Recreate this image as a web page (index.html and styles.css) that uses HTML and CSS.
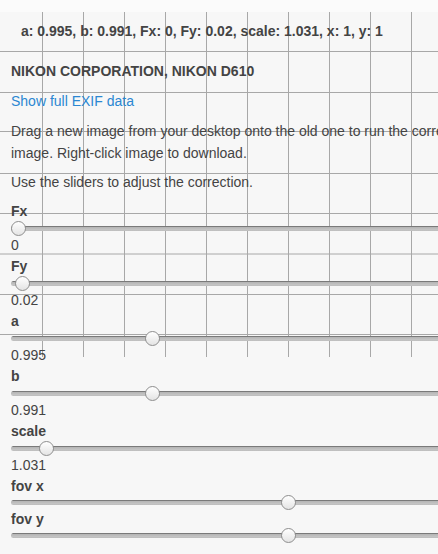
FILE: index.html
```html
<!DOCTYPE html>
<html lang="en">
<head>
<meta charset="utf-8">
<title>Lens correction</title>
<link rel="stylesheet" href="styles.css">
</head>
<body>
<div class="page">
  <div class="topstrip"></div>
  <svg class="grid" width="600" height="345" viewBox="0 0 600 345" aria-hidden="true">
    <g stroke="#a8a8a8" stroke-width="1" fill="none">
      <path d="M42.5 0V345M83.5 0V345M124.5 0V345M165.5 0V345M206.5 0V345M247.5 0V345M288.5 0V345M329.5 0V345M370.5 0V345M411.5 0V345M452.5 0V345"/>
      <path d="M0 39.5H600M0 80.5H600M0 119.5H600M0 161.5H600M0 201.5H600M0 242H600M0 282.5H600M0 322.5H600"/>
    </g>
  </svg>
  <main class="content">
    <div class="params">a: 0.995, b: 0.991, Fx: 0, Fy: 0.02, scale: 1.031, x: 1, y: 1</div>
    <h1 class="camera">NIKON CORPORATION, NIKON D610</h1>
    <a class="exif" href="#">Show full EXIF data</a>
    <p class="note">Drag a new image from your desktop onto the old one to run the correction on the new image. Right-click image to download.</p>
    <p class="note hint">Use the sliders to adjust the correction.</p>
    <div class="controls">
      <div class="control">
        <label class="label" for="fx">Fx</label>
        <input class="slider" id="fx" type="range" min="0" max="545" step="any" value="0">
        <div class="value">0</div>
      </div>
      <div class="control">
        <label class="label" for="fy">Fy</label>
        <input class="slider" id="fy" type="range" min="0" max="545" step="any" value="4.5">
        <div class="value">0.02</div>
      </div>
      <div class="control">
        <label class="label" for="a">a</label>
        <input class="slider" id="a" type="range" min="0" max="545" step="any" value="133.5">
        <div class="value">0.995</div>
      </div>
      <div class="control">
        <label class="label" for="b">b</label>
        <input class="slider" id="b" type="range" min="0" max="545" step="any" value="133.5">
        <div class="value">0.991</div>
      </div>
      <div class="control">
        <label class="label" for="scale">scale</label>
        <input class="slider" id="scale" type="range" min="0" max="545" step="any" value="27.5">
        <div class="value">1.031</div>
      </div>
      <div class="control bare">
        <label class="label" for="fovx">fov x</label>
        <input class="slider" id="fovx" type="range" min="0" max="545" step="any" value="269.5">
      </div>
      <div class="control bare">
        <label class="label" for="fovy">fov y</label>
        <input class="slider" id="fovy" type="range" min="0" max="545" step="any" value="269.5">
      </div>
    </div>
  </main>
</div>
</body>
</html>
```

FILE: styles.css
```css
html, body {
  margin: 0;
  padding: 0;
  overflow: hidden;
  background: #f7f7f7;
}

body {
  font-family: "Liberation Sans", Arial, Helvetica, sans-serif;
  font-size: 14px;
  line-height: 20px;
  color: #444;
}

.page {
  position: relative;
  min-height: 554px;
}

.topstrip {
  height: 12px;
  background: #fbfbfb;
}

.grid {
  position: absolute;
  top: 12px;
  left: 0;
  display: block;
}

.content {
  position: relative;
  width: 560px;
  padding: 9px 0 0 11px;
}

.params {
  font-weight: bold;
  padding-left: 10px;
}

.camera {
  margin: 20px 0 0;
  font-size: 14px;
  line-height: 20px;
  font-weight: bold;
}

.exif {
  display: block;
  margin-top: 10px;
  color: #2b87d2;
  text-decoration: none;
}

.note {
  margin: 9px 0 0;
  line-height: 22px;
}

.hint {
  margin-top: 7px;
}

.controls {
  display: flex;
  flex-direction: column;
  margin-top: 10px;
}

.control {
  display: flex;
  flex-direction: column;
  margin-bottom: 5px;
}

.control.bare {
  margin-bottom: 0;
}

.label {
  font-weight: bold;
  line-height: 16px;
}

.value {
  line-height: 16px;
}

.slider {
  -webkit-appearance: none;
  appearance: none;
  display: block;
  width: 560px;
  height: 18px;
  margin: 0;
  padding: 0;
  background: transparent;
}

.bare .slider {
  height: 17px;
}

.slider::-webkit-slider-runnable-track {
  height: 5px;
  border-radius: 3px;
  background: linear-gradient(#7a7a7a 0, #7a7a7a 1px, #b4b4b4 1px, #c6c6c6 4px, #b9b9b9 5px);
}

.slider::-webkit-slider-thumb {
  -webkit-appearance: none;
  appearance: none;
  width: 15px;
  height: 15px;
  margin-top: -5px;
  border-radius: 50%;
  border: 1px solid #8e8e8e;
  box-sizing: border-box;
  background: linear-gradient(#ffffff, #e4e4e4);
}
```
